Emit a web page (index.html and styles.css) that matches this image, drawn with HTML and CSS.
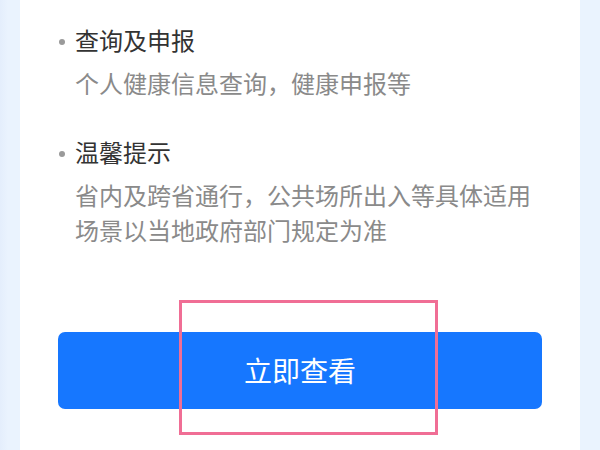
FILE: index.html
```html
<!DOCTYPE html>
<html lang="zh-CN">
<head>
<meta charset="utf-8">
<title>健康服务</title>
<link rel="stylesheet" href="styles.css">
</head>
<body>
<div class="page">
  <div class="card">
    <ul class="list">
      <li class="item">
        <div class="item-title">查询及申报</div>
        <div class="item-desc">个人健康信息查询，健康申报等</div>
      </li>
      <li class="item">
        <div class="item-title">温馨提示</div>
        <div class="item-desc">省内及跨省通行，公共场所出入等具体适用场景以当地政府部门规定为准</div>
      </li>
    </ul>
    <button class="btn" type="button">立即查看</button>
  </div>
  <div class="highlight"></div>
</div>
</body>
</html>
```

FILE: styles.css
```css
* { box-sizing: border-box; }
html, body { margin: 0; padding: 0; }
body {
  font-family: "Noto Sans CJK SC", "Noto Sans", sans-serif;
  background: #e9f2fe;
}
.page {
  position: relative;
  width: 600px;
  height: 450px;
  overflow: hidden;
  background: linear-gradient(90deg, #e4eefc 0, #eaf3fe 8px, #eaf3fe 100%);
  padding: 0 20px;
}
.card {
  background: #ffffff;
  height: 450px;
  padding: 22px 38px 0;
  display: flex;
  flex-direction: column;
}
.list {
  list-style: none;
  margin: 0;
  padding: 0;
  display: flex;
  flex-direction: column;
  gap: 34px;
}
.item-title {
  display: flex;
  align-items: center;
  font-size: 24px;
  line-height: 36px;
  color: #333333;
}
.item-title::before {
  content: "";
  width: 6px;
  height: 6px;
  border-radius: 50%;
  background: #9a9a9a;
  margin-left: 1px;
  margin-right: 10px;
  transform: translateY(2px);
  flex: none;
}
.item-desc {
  margin-top: 7px;
  padding-left: 17px;
  font-size: 24px;
  line-height: 35px;
  color: #8a8a8a;
}
.btn {
  margin-top: 85px;
  height: 77px;
  width: 100%;
  border: none;
  border-radius: 7px;
  background: #1677ff;
  color: #ffffff;
  font-family: "Noto Sans CJK SC", "Noto Sans", sans-serif;
  font-size: 28px;
  line-height: 77px;
  padding: 0;
}
.highlight {
  position: absolute;
  left: 179px;
  top: 300px;
  width: 259px;
  height: 135px;
  border: 3px solid #f06e95;
}
```
